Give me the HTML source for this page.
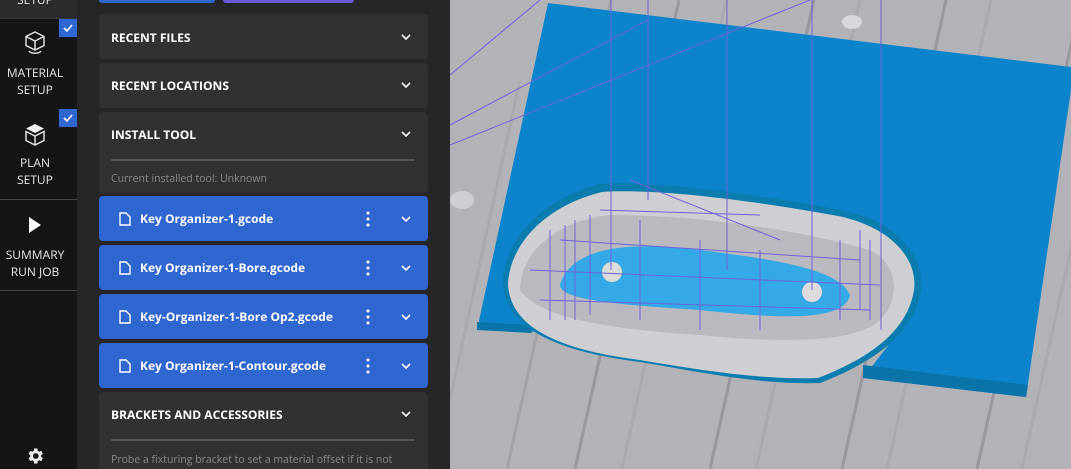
<!DOCTYPE html>
<html><head><meta charset="utf-8"><style>
*{box-sizing:border-box;margin:0;padding:0}
html{width:1071px;height:469px;overflow:hidden}
body{width:1071px;height:469px;overflow:hidden;background:#262626;font-family:"Open Sans","Liberation Sans",sans-serif;position:relative}
.sb{position:absolute;left:0;top:0;width:77px;height:469px;background:#151515}
.sbtop{position:absolute;left:0;top:0;width:77px;height:19px;background:#2b2b2b;border-bottom:1px solid #3a3a3a}
.lbl{position:absolute;width:70px;left:0;text-align:center;color:#e8e8e8;font-size:12px;line-height:17px}
.chk{position:absolute;left:59px;width:18px;height:18px;background:#3067d3}
.sep{position:absolute;left:0;width:77px;height:1px;background:#444}
.card{position:absolute;left:99px;width:329px;background:#313131;border-radius:4px;overflow:hidden}
.h{position:absolute;left:12px;color:#fff;font-weight:bold;font-size:12px;}
.chev{position:absolute;left:301px;width:12px;height:8px}
.blue{background:#3066cf}
.line{position:absolute;left:12px;width:304px;height:2px;background:#555}
.sub{position:absolute;left:12px;color:#8a8a8a;font-size:10.5px;white-space:nowrap}
</style></head><body>
<div class="sb">
 <div class="sbtop"><div class="lbl" style="top:-9px">SETUP</div></div>
 <div class="chk" style="top:19px"><svg width="18" height="18"><path d="M5 9l3 3 5-6" stroke="#fff" stroke-width="1.6" fill="none"/></svg></div>
 <svg style="position:absolute;left:23px;top:30px" width="24" height="26" viewBox="0 0 24 26" fill="none" stroke="#ddd" stroke-width="1.5"><path d="M12 2l9 4.5v9L12 20 3 15.5v-9z M3 6.5L12 11l9-4.5 M12 11v9"/><path d="M6 21c2 3 10 3 12 0" /></svg>
 <div class="lbl" style="top:64px">MATERIAL<br>SETUP</div>
 <div class="chk" style="top:109px"><svg width="18" height="18"><path d="M5 9l3 3 5-6" stroke="#fff" stroke-width="1.6" fill="none"/></svg></div>
 <svg style="position:absolute;left:23px;top:122px" width="24" height="26" viewBox="0 0 24 26"><path d="M12 2l9 4.5L12 11 3 6.5z" fill="#eee"/><path d="M3 9.5L12 14l9-4.5v9L12 23 3 18.5z M12 14v9" stroke="#ddd" stroke-width="1.5" fill="none"/></svg>
 <div class="lbl" style="top:154px">PLAN<br>SETUP</div>
 <div class="sep" style="top:199px"></div>
 <svg style="position:absolute;left:28px;top:217px" width="14" height="16"><path d="M1 0l12 8-12 8z" fill="#fff"/></svg>
 <div class="lbl" style="top:246px">SUMMARY<br>RUN JOB</div>
 <div class="sep" style="top:290px"></div>
 <svg style="position:absolute;left:25px;top:446px" width="20" height="20" viewBox="0 0 24 24"><path fill="#eee" d="M19.4 13a7.5 7.5 0 000-2l2.1-1.6-2-3.5-2.5 1a7 7 0 00-1.7-1L14.9 3h-4l-.4 2.9a7 7 0 00-1.7 1l-2.5-1-2 3.5L6.4 11a7.5 7.5 0 000 2l-2.1 1.6 2 3.5 2.5-1a7 7 0 001.7 1l.4 2.9h4l.4-2.9a7 7 0 001.7-1l2.5 1 2-3.5zM12.9 15.5a3.5 3.5 0 110-7 3.5 3.5 0 010 7z"/></svg>
</div>
<div style="position:absolute;left:99px;top:-4px;width:116px;height:7px;background:#3066cf;border-radius:3px"></div>
<div style="position:absolute;left:223px;top:-4px;width:131px;height:7px;background:#6b5bd8;border-radius:3px"></div>

<div class="card" style="top:14px;height:45px"><div class="h" style="top:15px">RECENT FILES</div><svg class="chev" style="top:19px" viewBox="0 0 12 8"><path d="M2 2l4 4 4-4" stroke="#fff" stroke-width="1.6" fill="none"/></svg></div>
<div class="card" style="top:63px;height:45px"><div class="h" style="top:14px">RECENT LOCATIONS</div><svg class="chev" style="top:18px" viewBox="0 0 12 8"><path d="M2 2l4 4 4-4" stroke="#fff" stroke-width="1.6" fill="none"/></svg></div>
<div class="card" style="top:112px;height:81px"><div class="h" style="top:14px">INSTALL TOOL</div><svg class="chev" style="top:18px" viewBox="0 0 12 8"><path d="M2 2l4 4 4-4" stroke="#fff" stroke-width="1.6" fill="none"/></svg><div class="line" style="top:47px"></div><div class="sub" style="top:60px">Current installed tool: Unknown</div></div>

<div class="card blue" style="top:196px;height:45px"><svg style="position:absolute;left:20px;top:16px" width="12" height="14"><path d="M1 1h6l4 4v8H1z" stroke="#fff" stroke-width="1.4" fill="none"/></svg><div class="h" style="left:41px;top:14px">Key Organizer-1.gcode</div><svg style="position:absolute;left:267px;top:15px" width="4" height="16"><circle cx="2" cy="2" r="1.5" fill="#fff"/><circle cx="2" cy="8" r="1.5" fill="#fff"/><circle cx="2" cy="14" r="1.5" fill="#fff"/></svg><svg class="chev" style="top:19px" viewBox="0 0 12 8"><path d="M2 2l4 4 4-4" stroke="#fff" stroke-width="1.6" fill="none"/></svg></div>
<div class="card blue" style="top:245px;height:45px"><svg style="position:absolute;left:20px;top:16px" width="12" height="14"><path d="M1 1h6l4 4v8H1z" stroke="#fff" stroke-width="1.4" fill="none"/></svg><div class="h" style="left:41px;top:14px">Key Organizer-1-Bore.gcode</div><svg style="position:absolute;left:267px;top:15px" width="4" height="16"><circle cx="2" cy="2" r="1.5" fill="#fff"/><circle cx="2" cy="8" r="1.5" fill="#fff"/><circle cx="2" cy="14" r="1.5" fill="#fff"/></svg><svg class="chev" style="top:19px" viewBox="0 0 12 8"><path d="M2 2l4 4 4-4" stroke="#fff" stroke-width="1.6" fill="none"/></svg></div>
<div class="card blue" style="top:294px;height:45px"><svg style="position:absolute;left:20px;top:16px" width="12" height="14"><path d="M1 1h6l4 4v8H1z" stroke="#fff" stroke-width="1.4" fill="none"/></svg><div class="h" style="left:41px;top:14px">Key-Organizer-1-Bore Op2.gcode</div><svg style="position:absolute;left:267px;top:15px" width="4" height="16"><circle cx="2" cy="2" r="1.5" fill="#fff"/><circle cx="2" cy="8" r="1.5" fill="#fff"/><circle cx="2" cy="14" r="1.5" fill="#fff"/></svg><svg class="chev" style="top:19px" viewBox="0 0 12 8"><path d="M2 2l4 4 4-4" stroke="#fff" stroke-width="1.6" fill="none"/></svg></div>
<div class="card blue" style="top:343px;height:45px"><svg style="position:absolute;left:20px;top:16px" width="12" height="14"><path d="M1 1h6l4 4v8H1z" stroke="#fff" stroke-width="1.4" fill="none"/></svg><div class="h" style="left:41px;top:14px">Key Organizer-1-Contour.gcode</div><svg style="position:absolute;left:267px;top:15px" width="4" height="16"><circle cx="2" cy="2" r="1.5" fill="#fff"/><circle cx="2" cy="8" r="1.5" fill="#fff"/><circle cx="2" cy="14" r="1.5" fill="#fff"/></svg><svg class="chev" style="top:19px" viewBox="0 0 12 8"><path d="M2 2l4 4 4-4" stroke="#fff" stroke-width="1.6" fill="none"/></svg></div>
<div class="card" style="top:392px;height:77px;border-radius:4px 4px 0 0"><div class="h" style="top:14px">BRACKETS AND ACCESSORIES</div><svg class="chev" style="top:18px" viewBox="0 0 12 8"><path d="M2 2l4 4 4-4" stroke="#fff" stroke-width="1.6" fill="none"/></svg><div class="line" style="top:47px"></div><div class="sub" style="top:61px">Probe a fixturing bracket to set a material offset if it is not</div></div>

<svg style="position:absolute;left:450px;top:0" width="621" height="469" viewBox="450 0 621 469">
 <rect x="450" y="0" width="621" height="469" fill="#b3b2b7"/>
 <g stroke-width="3">
  <line x1="507" y1="469" x2="611" y2="0" stroke="#a3a2a7"/>
  <line x1="575" y1="469" x2="679" y2="0" stroke="#99989d"/>
  <line x1="622" y1="469" x2="726" y2="0" stroke="#aaa9ae"/>
  <line x1="710" y1="469" x2="814" y2="0" stroke="#99989d"/>
  <line x1="756" y1="469" x2="860" y2="0" stroke="#aaa9ae"/>
  <line x1="842" y1="469" x2="946" y2="0" stroke="#99989d"/>
  <line x1="887" y1="469" x2="991" y2="0" stroke="#aaa9ae"/>
  <line x1="977" y1="469" x2="1081" y2="0" stroke="#99989d"/>
  <line x1="1022" y1="469" x2="1126" y2="0" stroke="#aaa9ae"/>
  <line x1="450" y1="400" x2="520" y2="80" stroke="#aaa9ae"/>
 </g>
 <ellipse cx="852" cy="22" rx="10" ry="7" fill="#d8d8dc"/>
 <ellipse cx="462" cy="200" rx="12" ry="9" fill="#cfcfd3"/>
 <polygon points="548,3 1071,67 1071,90 1026,397 863,378 900,330 820,340 477,330" fill="#0c84cc"/>
 <polygon points="477,322 530,325 532,333 477,330" fill="#0a74a8"/>
 <polygon points="863,365 1028,385 1026,397 863,378" fill="#0a74a8"/>
 <path d="M503,282 C505,240 540,200 599,184 C660,180 760,195 840,210 C900,220 925,260 921,290 C915,330 880,360 820,383 C760,385 700,372 640,362 C560,352 505,330 503,282Z" fill="#0b7cae"/>
 <path d="M508,284 C510,244 545,206 602,192 C660,188 760,202 838,216 C895,228 918,262 914,290 C908,328 875,356 818,378 C760,380 700,370 640,360 C560,350 510,328 508,284Z" fill="#cfcfd3"/>
 <path d="M520,290 C520,250 560,220 610,215 C700,215 800,230 870,250 C900,265 900,300 880,320 C860,340 800,345 700,335 C620,330 540,320 520,290Z" fill="#b9b9bf"/>
 <path d="M560,285 C570,250 620,240 700,250 C780,260 840,270 850,295 C845,320 790,320 700,310 C620,305 560,300 560,285Z" fill="#35a9e6"/>
 <circle cx="612" cy="272" r="10" fill="#dcdcdc"/>
 <circle cx="812" cy="292" r="10" fill="#dcdcdc"/>
 <g stroke="#6e62d9" stroke-width="1" fill="none">
  <line x1="611" y1="0" x2="611" y2="270"/><line x1="648" y1="0" x2="648" y2="200"/>
  <line x1="727" y1="0" x2="727" y2="270"/><line x1="812" y1="0" x2="812" y2="290"/>
  <line x1="881" y1="0" x2="881" y2="330"/><line x1="450" y1="145" x2="810" y2="0"/>
  <line x1="450" y1="75" x2="540" y2="0"/><line x1="450" y1="125" x2="648" y2="20"/>
  <path d="M540,300 L870,310 M560,240 L860,260 M530,270 L880,285 M600,210 L760,215 M630,180 L780,240"/>
  <path d="M550,230 v90 M565,225 v95 M575,220 v100 M590,215 v100 M640,220 v100 M700,240 v90 M760,250 v80 M840,240 v80 M860,230 v80 M870,240 v80"/>
 </g>
</svg>
</body></html>
